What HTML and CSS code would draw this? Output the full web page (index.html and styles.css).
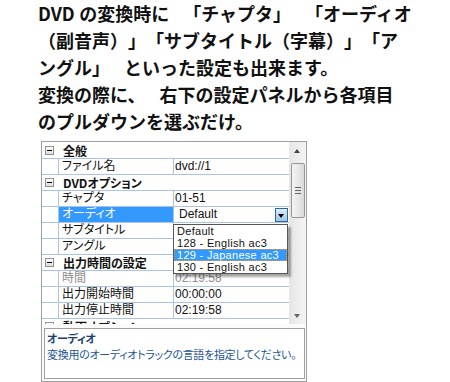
FILE: index.html
```html
<!DOCTYPE html>
<html lang="ja">

<head>
    <meta charset="UTF-8">
    <meta name="viewport" content="width=device-width, initial-scale=1.0">
    <title>DVD変換の設定</title>
    <link rel="stylesheet" href="styles.css">
</head>

<body>
    <p class="intro">
        DVD&#8197;の変換時に 「チャプタ」 「オーディオ<br>
        （副音声）」「サブタイトル（字幕）」「ア<br>
        ングル」 といった設定も出来ます。<br>
        変換の際に、 右下の設定パネルから各項目<br>
        のプルダウンを選ぶだけ。
    </p>

    <div class="panel">
        <div class="grid-wrap">
            <div class="rows">
                <div class="row cat"><span class="toggle"></span>全般</div>
                <div class="row"><span class="gutter"></span><span class="name">ファイル名</span><span class="value">dvd://1</span></div>
                <div class="row cat"><span class="toggle"></span>DVDオプション</div>
                <div class="row"><span class="gutter"></span><span class="name">チャプタ</span><span class="value">01-51</span></div>
                <div class="row selected">
                    <span class="gutter"></span><span class="name">オーディオ</span>
                    <span class="value combo"><span class="combo-text">Default</span><span class="combo-btn"></span></span>
                </div>
                <!-- values of the next rows are hidden by the open list -->
                <div class="row"><span class="gutter"></span><span class="name">サブタイトル</span><span class="value"></span></div>
                <div class="row"><span class="gutter"></span><span class="name">アングル</span><span class="value"></span></div>
                <div class="row cat"><span class="toggle"></span>出力時間の設定</div>
                <div class="row readonly"><span class="gutter"></span><span class="name">時間</span><span class="value">02:19:58</span></div>
                <div class="row"><span class="gutter"></span><span class="name">出力開始時間</span><span class="value">00:00:00</span></div>
                <div class="row"><span class="gutter"></span><span class="name">出力停止時間</span><span class="value">02:19:58</span></div>
                <div class="row cat"><span class="toggle"></span>動画オプション</div>
            </div>

            <div class="scrollbar">
                <span class="arrow up"></span>
                <span class="thumb"><span class="grip"></span></span>
                <span class="track"></span>
                <span class="arrow down"></span>
            </div>

            <ul class="dropdown">
                <li>Default</li>
                <li>128 - English ac3</li>
                <li class="current">129 - Japanese ac3</li>
                <li>130 - English ac3</li>
            </ul>
        </div>

        <div class="desc">
            <p class="desc-title">オーディオ</p>
            <p class="desc-text">変換用のオーディオトラックの言語を指定してください。</p>
        </div>
    </div>
</body>

</html>
```

FILE: styles.css
```css
body {
    margin: 0;
    background-color: #fff;
    font-family: "Noto Sans CJK JP", sans-serif;
    color: #111;
}
.intro {
    margin: 0 0 0 38px;
    font-size: 18px;
    line-height: 27px;
    font-weight: bold;
    word-spacing: 10px;
    text-spacing-trim: space-all;
    white-space: nowrap;
}
.panel {
    margin: 6px 0 0 41px;
    width: 264px;
    height: 239px;
    border: 1px solid #a0a0a0;
    background-color: #fbfbfb;
    display: flex;
    flex-direction: column;
    font-family: "Liberation Sans", "Noto Sans CJK JP", sans-serif;
    font-feature-settings: "palt";
    font-size: 12px;
}
.grid-wrap {
    position: relative;
    display: flex;
    height: 182px;
    overflow: hidden;
}
.rows {
    width: 247px;
    padding-top: 1px;
    background-color: #fff;
}
.row {
    display: grid;
    grid-template-columns: 16px 115px 1fr;
    height: 15px;
    line-height: 15px;
    border-bottom: 1px solid #a9c4e6;
    white-space: nowrap;
    overflow: hidden;
}
.name {
    border-left: 1px solid #a9c4e6;
    padding-left: 3px;
}
.value {
    border-left: 1px solid #a9c4e6;
    padding-left: 1px;
}
.row.cat {
    display: flex;
    align-items: center;
    padding-left: 3px;
    font-weight: bold;
    font-family: "Noto Sans CJK JP", sans-serif;
}
.toggle {
    position: relative;
    width: 7px;
    height: 7px;
    margin-right: 9px;
    border: 1px solid #919191;
    background: linear-gradient(#fff, #dcdcdc);
}
.toggle::after {
    content: "";
    position: absolute;
    left: 1px;
    top: 3px;
    width: 5px;
    height: 1px;
    background-color: #000;
}
.row.selected .name {
    background-color: #3399ff;
    color: #fff;
}
.row.readonly {
    color: #8d8d8d;
}
.combo {
    display: flex;
    align-items: center;
    padding-left: 5px;
}
.combo-text {
    flex: 1;
}
.combo-btn {
    position: relative;
    width: 11px;
    height: 12px;
    margin-right: 1px;
    border: 1px solid #2f6a98;
    background: linear-gradient(#dcecf9, #9cc6e8);
}
.combo-btn::after {
    content: "";
    position: absolute;
    left: 2px;
    top: 5px;
    border-left: 3.5px solid transparent;
    border-right: 3.5px solid transparent;
    border-top: 4px solid #000;
}

.scrollbar {
    width: 17px;
    display: flex;
    flex-direction: column;
    background: linear-gradient(to right, #e6e6e6, #f4f4f4);
}
.arrow {
    position: relative;
    height: 17px;
}
.arrow::after {
    content: "";
    position: absolute;
    left: 5px;
    top: 7px;
    border-left: 3.5px solid transparent;
    border-right: 3.5px solid transparent;
}
.arrow.up::after {
    border-bottom: 4px solid #444;
}
.arrow.down::after {
    border-top: 4px solid #666;
}
.thumb {
    margin: 4px 1px 0 2px;
    height: 53px;
    border: 1px solid #979797;
    border-radius: 2px;
    background: linear-gradient(to right, #f4f4f4, #dadada);
    display: flex;
    align-items: center;
    justify-content: center;
}
.grip {
    width: 6px;
    height: 7px;
    background: repeating-linear-gradient(#666 0 1px, transparent 1px 3px);
}
.track {
    flex: 1;
}

.dropdown {
    position: absolute;
    left: 131px;
    top: 82px;
    width: 113px;
    margin: 0;
    padding: 0;
    list-style: none;
    border: 1px solid #555;
    background-color: #fff;
    box-shadow: 3px 3px 2px rgba(0, 0, 0, 0.35);
    font-size: 11px;
    letter-spacing: 0.3px;
}
.dropdown li {
    height: 12px;
    line-height: 12px;
    padding-left: 3px;
    white-space: nowrap;
}
.dropdown li.current {
    background-color: #3399ff;
    color: #fff;
    outline: 1px dotted #f09a2a;
    outline-offset: -1px;
}

.desc {
    margin: 4px 1px 2px 2px;
    flex: 1;
    border: 1px solid #a0a0a0;
    background-color: #fff;
    padding: 1px 2px;
    font-family: "Noto Sans CJK JP", sans-serif;
    font-size: 11px;
    letter-spacing: -0.3px;
    white-space: nowrap;
}
.desc p {
    margin: 0;
    line-height: 16px;
}
.desc-title {
    font-weight: bold;
    color: #163f6e;
}
.desc-text {
    color: #1d5597;
}
```
